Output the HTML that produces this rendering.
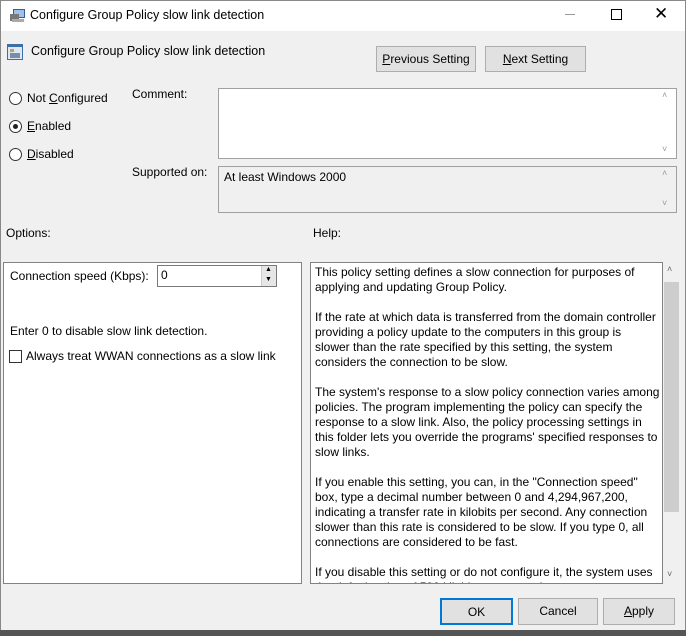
<!DOCTYPE html>
<html><head><style>
*{margin:0;padding:0;box-sizing:border-box}
body{width:686px;height:636px;background:#f0f0f0;font-family:"Liberation Sans",sans-serif;font-size:12px;color:#000;position:relative;overflow:hidden}
.a{position:absolute;white-space:nowrap}
.btn{position:absolute;background:#e1e1e1;border:1px solid #adadad;text-align:center;font-size:12px}
.rad{position:absolute;width:13px;height:13px;border:1px solid #333;border-radius:50%;background:#fff}
.box{position:absolute;background:#fff;border:1px solid #828790}
.help div{height:15px;letter-spacing:0px}
</style></head><body>
<div class="a" style="left:0;top:0;width:686px;height:31px;background:#fff;border:1px solid #888;border-bottom:none"></div>
<svg class="a" style="left:9px;top:8px" width="17" height="15"><rect x="4" y="1" width="12" height="9" fill="#3a5a9a"/><rect x="5" y="2" width="10" height="7" fill="#9cc1ec"/><rect x="1" y="6" width="9" height="7" fill="#777"/><rect x="3" y="11" width="12" height="3" fill="#aaa"/></svg>
<div class="a" style="left:30px;top:8px;font-size:12.5px">Configure Group Policy slow link detection</div>
<div class="a" style="left:565px;top:14px;width:10px;height:1px;background:#999"></div>
<div class="a" style="left:611px;top:9px;width:11px;height:11px;border:1px solid #000"></div>
<div class="a" style="left:654px;top:4px;font-size:17px;font-weight:300">✕</div>
<div class="a" style="left:0;top:31px;width:1px;height:600px;background:#888"></div>
<div class="a" style="right:0;top:31px;width:1px;height:600px;background:#888"></div>
<div class="a" style="left:0;top:630px;width:686px;height:6px;background:#555"></div>
<svg class="a" style="left:7px;top:44px" width="16" height="16"><rect x="0" y="0" width="16" height="16" fill="#3c6ea8"/><rect x="1" y="3" width="14" height="12" fill="#dde8f4"/><rect x="3" y="9" width="10" height="5" fill="#7a8ea8"/><rect x="3" y="5" width="4" height="3" fill="#c8a058"/></svg>
<div class="a" style="left:31px;top:44px;font-size:12.5px">Configure Group Policy slow link detection</div>
<div class="btn" style="left:376px;top:46px;width:100px;height:26px;line-height:24px"><u>P</u>revious Setting</div>
<div class="btn" style="left:485px;top:46px;width:101px;height:26px;line-height:24px"><u>N</u>ext Setting</div>
<div class="rad" style="left:9px;top:92px"></div><div class="a" style="left:27px;top:91px">Not <u>C</u>onfigured</div>
<div class="rad" style="left:9px;top:120px"></div><div class="a" style="left:13px;top:124px;width:5px;height:5px;border-radius:50%;background:#222"></div><div class="a" style="left:27px;top:119px"><u>E</u>nabled</div>
<div class="rad" style="left:9px;top:148px"></div><div class="a" style="left:27px;top:147px"><u>D</u>isabled</div>
<div class="a" style="left:132px;top:87px">Comment:</div>
<div class="box" style="left:218px;top:88px;width:459px;height:71px;border-color:#a0a0a0"></div>
<div class="a" style="left:662px;top:90px;color:#999;font-size:9px">˄</div><div class="a" style="left:662px;top:144px;color:#999;font-size:9px">˅</div>
<div class="a" style="left:132px;top:165px">Supported on:</div>
<div class="box" style="left:218px;top:166px;width:459px;height:47px;background:#f0f0f0;border-color:#a0a0a0"></div>
<div class="a" style="left:224px;top:170px">At least Windows 2000</div>
<div class="a" style="left:662px;top:168px;color:#999;font-size:9px">˄</div><div class="a" style="left:662px;top:198px;color:#999;font-size:9px">˅</div>
<div class="a" style="left:6px;top:226px">Options:</div>
<div class="a" style="left:313px;top:226px">Help:</div>
<div class="box" style="left:3px;top:262px;width:299px;height:322px;border-color:#828282"></div>
<div class="a" style="left:10px;top:269px">Connection speed (Kbps):</div>
<div class="box" style="left:157px;top:265px;width:120px;height:22px;border-color:#7a7a7a"></div>
<div class="a" style="left:161px;top:268px">0</div>
<div class="a" style="left:261px;top:266px;width:15px;height:20px;background:#e6e6e6;border-left:1px solid #ccc"></div>
<div class="a" style="left:265px;top:266px;font-size:7px">▲</div><div class="a" style="left:265px;top:276px;font-size:7px">▼</div>
<div class="a" style="left:10px;top:324px">Enter 0 to disable slow link detection.</div>
<div class="a" style="left:9px;top:350px;width:13px;height:13px;border:1px solid #333;background:#fff"></div>
<div class="a" style="left:26px;top:349px">Always treat WWAN connections as a slow link</div>
<div class="box help" style="left:310px;top:262px;width:353px;height:322px;border-color:#828282;padding:2px 0 0 4px;overflow:hidden;line-height:15px">
<div>This policy setting defines a slow connection for purposes of</div>
<div>applying and updating Group Policy.</div><div></div>
<div>If the rate at which data is transferred from the domain controller</div>
<div>providing a policy update to the computers in this group is</div>
<div>slower than the rate specified by this setting, the system</div>
<div>considers the connection to be slow.</div><div></div>
<div>The system's response to a slow policy connection varies among</div>
<div>policies. The program implementing the policy can specify the</div>
<div>response to a slow link. Also, the policy processing settings in</div>
<div>this folder lets you override the programs' specified responses to</div>
<div>slow links.</div><div></div>
<div>If you enable this setting, you can, in the "Connection speed"</div>
<div>box, type a decimal number between 0 and 4,294,967,200,</div>
<div>indicating a transfer rate in kilobits per second. Any connection</div>
<div>slower than this rate is considered to be slow. If you type 0, all</div>
<div>connections are considered to be fast.</div><div></div>
<div>If you disable this setting or do not configure it, the system uses</div>
<div>the default value of 500 kilobits per second.</div>
</div>
<div class="a" style="left:663px;top:262px;width:17px;height:322px;background:#f0f0f0"></div>
<div class="a" style="left:664px;top:282px;width:15px;height:230px;background:#cdcdcd"></div>
<div class="a" style="left:667px;top:264px;color:#666;font-size:9px">˄</div><div class="a" style="left:667px;top:569px;color:#666;font-size:9px">˅</div>
<div class="btn" style="left:440px;top:598px;width:73px;height:27px;line-height:25px;border:2px solid #0078d7">OK</div>
<div class="btn" style="left:518px;top:598px;width:80px;height:27px;line-height:25px">Cancel</div>
<div class="btn" style="left:603px;top:598px;width:72px;height:27px;line-height:25px"><u>A</u>pply</div>
</body></html>
